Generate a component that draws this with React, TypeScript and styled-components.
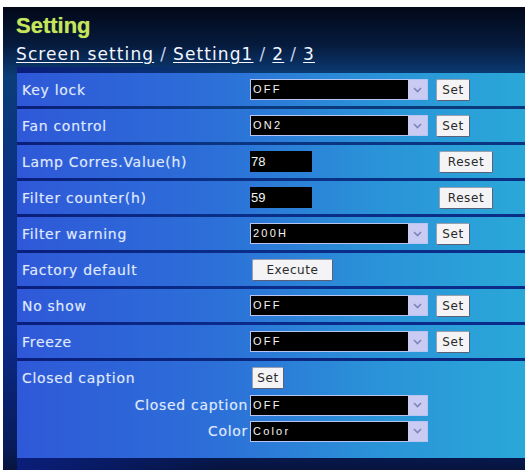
import React from "react";
import styled, { createGlobalStyle } from "styled-components";

const Global = createGlobalStyle`
  html, body { margin: 0; padding: 0; background: #ffffff; }
  body { font-family: "DejaVu Sans", "Liberation Sans", sans-serif; }
`;

const Page = styled.div`
  padding: 7px 0 0 3px;
  width: 525px;
  height: 470px;
  box-sizing: border-box;
  overflow: hidden;
`;

const Panel = styled.div`
  height: 463px;
  display: flex;
  flex-direction: column;
  background: linear-gradient(180deg, #020818 0%, #061a3c 8%, #0b3d78 15%, #0a2f86 40%, #0b2a8a 70%, #081c5a 95%, #06143e 100%);
`;

const Header = styled.div`
  padding: 6px 0 0 13px;
  height: 60px;
  box-sizing: border-box;
  display: flex;
  flex-direction: column;
`;

const Title = styled.div`
  font-family: "Liberation Sans", sans-serif;
  font-size: 22px;
  font-weight: bold;
  line-height: 26px;
  color: #c6e65c;
  text-shadow: 0 0 1px rgba(200, 240, 100, 0.6);
`;

const Crumbs = styled.div`
  font-family: "DejaVu Sans", sans-serif;
  font-size: 17px;
  line-height: 22px;
  color: #f2f6ff;
  letter-spacing: 1.1px;
  margin-top: 4px;
`;

const Link = styled.a`
  color: inherit;
  text-decoration: underline;
  text-underline-offset: 2px;
`;

const Slash = styled.span`
  color: #c8d0ec;
  margin: 0 6px;
`;

const Body = styled.div`
  flex: 1;
  display: flex;
  flex-direction: column;
  gap: 3px;
  margin-left: 14px;
  padding-top: 6px;
  padding-bottom: 12px;
  background: linear-gradient(90deg, #0a1e7a 0%, transparent 40%);
`;

const rowFill = "linear-gradient(90deg, #2f58d8 0%, #2c70d8 40%, #2a92d8 70%, #2aa8d8 100%)";

const Row = styled.div`
  height: 33px;
  display: grid;
  grid-template-columns: 233px 186px auto;
  align-items: center;
  background: ${rowFill};
`;

const Label = styled.div`
  padding-left: 5px;
  font-size: 14px;
  letter-spacing: 0.7px;
  color: #dfe8ff;
  white-space: nowrap;
  text-shadow: 0 0 1px rgba(230, 240, 255, 0.4);
`;

const SelectBox = styled.div`
  width: 178px;
  height: 21px;
  display: flex;
  border: 1px solid #b8c4f0;
  box-sizing: border-box;
`;

const SelectValue = styled.div`
  flex: 1;
  background: #000;
  color: #f4f4f4;
  font-family: "Liberation Sans", sans-serif;
  font-size: 11px;
  letter-spacing: 2.2px;
  line-height: 19px;
  padding-left: 2px;
`;

const Arrow = styled.div`
  width: 19px;
  background: #c9cbf2;
  display: flex;
  align-items: center;
  justify-content: center;
`;

const NumberBox = styled.div`
  width: 62px;
  height: 21px;
  background: #000;
  color: #f4f4f4;
  font-family: "Liberation Sans", sans-serif;
  font-size: 13px;
  line-height: 21px;
  padding-left: 1px;
  box-sizing: border-box;
`;

const Button = styled.button<{ $w: number; $shift?: number }>`
  width: ${(p) => p.$w}px;
  height: 22px;
  margin-left: ${(p) => p.$shift ?? 0}px;
  padding: 0;
  background: #f4f4f6;
  border: 1px solid #9aa0b0;
  border-right-color: #5a6078;
  border-bottom-color: #5a6078;
  border-radius: 2px;
  color: #2a2a2a;
  font-family: "DejaVu Sans", sans-serif;
  font-size: 12px;
  letter-spacing: 0.6px;
  justify-self: start;
`;

const Caption = styled.div`
  flex: 1;
  background: ${rowFill};
  display: flex;
  flex-direction: column;
  padding-top: 3px;
`;

const CaptionHead = styled.div`
  height: 28px;
  display: grid;
  grid-template-columns: 235px auto;
  align-items: center;
`;

const SubRow = styled.div`
  height: 26px;
  display: grid;
  grid-template-columns: 233px auto;
  align-items: center;
`;

const SubLabel = styled(Label)`
  text-align: right;
  padding: 0 2px 0 0;
`;

const Chevron = () => (
  <svg width="9" height="6" viewBox="0 0 9 6">
    <path d="M1 1 L4.5 4.5 L8 1" fill="none" stroke="#7c86b8" strokeWidth="1.6" />
  </svg>
);

const Select = ({ value }: { value: string }) => (
  <SelectBox>
    <SelectValue>{value}</SelectValue>
    <Arrow>
      <Chevron />
    </Arrow>
  </SelectBox>
);

type Item =
  | { kind: "select"; label: string; value: string }
  | { kind: "counter"; label: string; value: string }
  | { kind: "exec"; label: string };

const items: Item[] = [
  { kind: "select", label: "Key lock", value: "OFF" },
  { kind: "select", label: "Fan control", value: "ON2" },
  { kind: "counter", label: "Lamp Corres.Value(h)", value: "78" },
  { kind: "counter", label: "Filter counter(h)", value: "59" },
  { kind: "select", label: "Filter warning", value: "200H" },
  { kind: "exec", label: "Factory default" },
  { kind: "select", label: "No show", value: "OFF" },
  { kind: "select", label: "Freeze", value: "OFF" },
];

export default function App() {
  return (
    <>
      <Global />
      <Page>
        <Panel>
          <Header>
            <Title>Setting</Title>
            <Crumbs>
              <Link>Screen setting</Link>
              <Slash>/</Slash>
              <Link>Setting1</Link>
              <Slash>/</Slash>
              <Link>2</Link>
              <Slash>/</Slash>
              <Link>3</Link>
            </Crumbs>
          </Header>
          <Body>
            {items.map((it) => (
              <Row key={it.label}>
                <Label>{it.label}</Label>
                {it.kind === "select" && (
                  <>
                    <Select value={it.value} />
                    <Button $w={34}>Set</Button>
                  </>
                )}
                {it.kind === "counter" && (
                  <>
                    <NumberBox>{it.value}</NumberBox>
                    <Button $w={54} $shift={3}>Reset</Button>
                  </>
                )}
                {it.kind === "exec" && (
                  <Button $w={81} $shift={2}>Execute</Button>
                )}
              </Row>
            ))}
            <Caption>
              <CaptionHead>
                <Label>Closed caption</Label>
                <Button $w={32}>Set</Button>
              </CaptionHead>
              <SubRow>
                <SubLabel>Closed caption</SubLabel>
                <Select value="OFF" />
              </SubRow>
              <SubRow>
                <SubLabel>Color</SubLabel>
                <Select value="Color" />
              </SubRow>
            </Caption>
          </Body>
        </Panel>
      </Page>
    </>
  );
}
